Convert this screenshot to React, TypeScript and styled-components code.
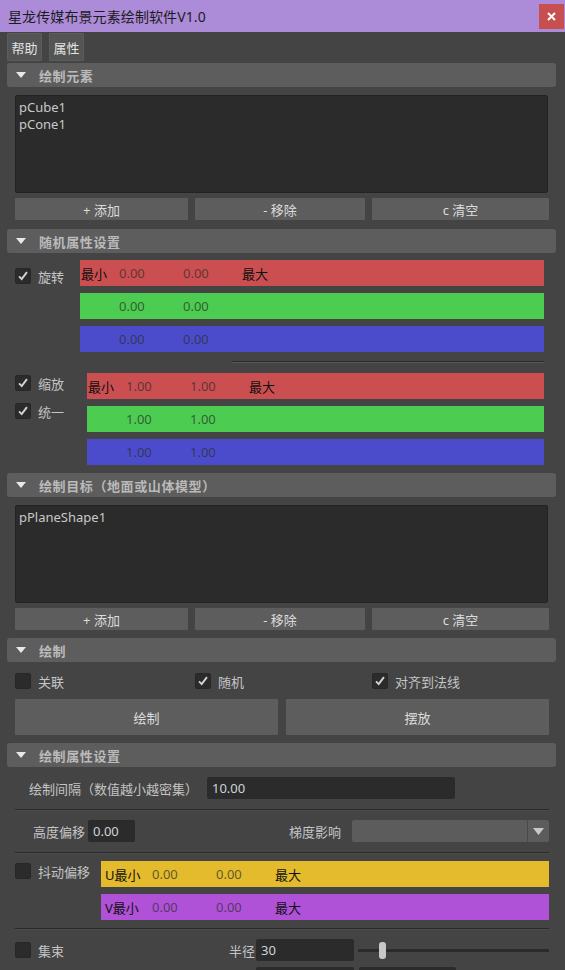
import { FC } from "react";
import styled, { createGlobalStyle } from "styled-components";

const GlobalStyle = createGlobalStyle`
  body {
    margin: 0;
    background: #444444;
  }
  * {
    box-sizing: border-box;
  }
`;

const FONT = `"Noto Sans", "Noto Sans CJK SC", sans-serif`;

const CheckBox: FC<{ checked?: boolean; label: string }> = ({ checked, label }) => (
  <CheckWrap>
    <Box>
      {checked && (
        <svg width="16" height="16" viewBox="0 0 16 16">
          <polyline
            points="3.5,8.5 6.5,11.5 12.5,3.5"
            fill="none"
            stroke="#d4d4d4"
            strokeWidth="2.2"
          />
        </svg>
      )}
    </Box>
    <span>{label}</span>
  </CheckWrap>
);

const SectionHeader: FC<{ title: string }> = ({ title }) => (
  <Header>
    <Triangle />
    {title}
  </Header>
);

type BarProps = {
  color: string;
  label?: string;
  min: string;
  max: string;
  labelWidth: number;
  pad: number;
  showMax?: boolean;
};

const ValueBar: FC<BarProps> = ({ color, label, min, max, labelWidth, pad, showMax }) => (
  <Bar $color={color} $labelWidth={labelWidth} $pad={pad}>
    <BarLabel>{label}</BarLabel>
    <BarValue>{min}</BarValue>
    <BarValue>{max}</BarValue>
    <BarLabel>{showMax ? "最大" : ""}</BarLabel>
  </Bar>
);

const App: FC = () => {
  return (
    <Window>
      <GlobalStyle />
      <TitleBar>
        <Title>星龙传媒布景元素绘制软件V1.0</Title>
        <CloseButton>
          <svg width="9" height="9" viewBox="0 0 9 9">
            <path d="M1 1 L8 8 M8 1 L1 8" stroke="#ffffff" strokeWidth="2" />
          </svg>
        </CloseButton>
      </TitleBar>

      <Body>
        <Tabs>
          <Tab>帮助</Tab>
          <Tab>属性</Tab>
        </Tabs>

        <SectionHeader title="绘制元素" />
        <Content $top={8} $bottom={9}>
          <ListBox>
            <div>pCube1</div>
            <div>pCone1</div>
          </ListBox>
          <ButtonRow>
            <Button>+ 添加</Button>
            <Button>- 移除</Button>
            <Button>c 清空</Button>
          </ButtonRow>
        </Content>

        <SectionHeader title="随机属性设置" />
        <Content $top={7} $bottom={8}>
          <AttrGroup $right={5}>
            <Side $width={65} $top={8}>
              <CheckBox checked label="旋转" />
            </Side>
            <Bars>
              <ValueBar color="#cb4f50" label="最小" min="0.00" max="0.00" labelWidth={38} pad={1} showMax />
              <ValueBar color="#4ccc50" min="0.00" max="0.00" labelWidth={38} pad={1} />
              <ValueBar color="#4b4ccb" min="0.00" max="0.00" labelWidth={38} pad={1} />
            </Bars>
          </AttrGroup>
          <ShortRule />
          <AttrGroup $right={5}>
            <Side $width={72} $top={2}>
              <CheckBox checked label="缩放" />
              <CheckBox checked label="统一" />
            </Side>
            <Bars>
              <ValueBar color="#cb4f50" label="最小" min="1.00" max="1.00" labelWidth={38} pad={1} showMax />
              <ValueBar color="#4ccc50" min="1.00" max="1.00" labelWidth={38} pad={1} />
              <ValueBar color="#4b4ccb" min="1.00" max="1.00" labelWidth={38} pad={1} />
            </Bars>
          </AttrGroup>
        </Content>

        <SectionHeader title="绘制目标（地面或山体模型）" />
        <Content $top={8} $bottom={8}>
          <ListBox>
            <div>pPlaneShape1</div>
          </ListBox>
          <ButtonRow>
            <Button>+ 添加</Button>
            <Button>- 移除</Button>
            <Button>c 清空</Button>
          </ButtonRow>
        </Content>

        <SectionHeader title="绘制" />
        <Content $top={11} $bottom={8}>
          <CheckRow>
            <CheckBox label="关联" />
            <CheckBox checked label="随机" />
            <CheckBox checked label="对齐到法线" />
          </CheckRow>
          <BigButtonRow>
            <BigButton>绘制</BigButton>
            <BigButton>摆放</BigButton>
          </BigButtonRow>
        </Content>

        <SectionHeader title="绘制属性设置" />
        <Content $top={10} $bottom={0}>
          <FormRow>
            <FieldLabel $width={183}>绘制间隔（数值越小越密集）</FieldLabel>
            <Field $width={248}>10.00</Field>
          </FormRow>
          <Rule $top={10} $bottom={9} />
          <FormRow>
            <FieldLabel $width={70}>高度偏移</FieldLabel>
            <Field $width={47} $gap={3}>0.00</Field>
            <FieldLabel $grow>梯度影响</FieldLabel>
            <Dropdown>
              <DropArrow>
                <svg width="11" height="7" viewBox="0 0 11 7">
                  <path d="M0 0 L11 0 L5.5 7 Z" fill="#c8c8c8" />
                </svg>
              </DropArrow>
            </Dropdown>
          </FormRow>
          <Rule $top={10} $bottom={7} />
          <AttrGroup $right={0}>
            <Side $width={86} $top={2}>
              <CheckBox label="抖动偏移" />
            </Side>
            <Bars>
              <ValueBar color="#e3bb2d" label="U最小" min="0.00" max="0.00" labelWidth={47} pad={4} showMax />
              <ValueBar color="#b052d8" label="V最小" min="0.00" max="0.00" labelWidth={47} pad={4} showMax />
            </Bars>
          </AttrGroup>
          <Rule $top={8} $bottom={9} />
          <FormRow>
            <CheckCell>
              <CheckBox label="集束" />
            </CheckCell>
            <FieldLabel $width={26}>半径</FieldLabel>
            <Field $width={98} $gap={1}>30</Field>
            <Slider>
              <Handle />
            </Slider>
          </FormRow>
          <FormRow $top={6}>
            <Field $width={98} $gap={241} />
            <Field $width={97} $gap={5} />
          </FormRow>
        </Content>
      </Body>
    </Window>
  );
};

const Window = styled.div`
  width: 565px;
  height: 970px;
  overflow: hidden;
  background: #444444;
  font-family: ${FONT};
  font-size: 13px;
  color: #c6c6c6;
`;

const TitleBar = styled.div`
  display: flex;
  align-items: center;
  justify-content: space-between;
  height: 32px;
  padding: 0 1px 0 8px;
  background: #ac8bd8;
`;

const Title = styled.div`
  font-size: 14px;
  color: #1c1c1c;
  letter-spacing: 0.1px;
`;

const CloseButton = styled.div`
  display: flex;
  align-items: center;
  justify-content: center;
  width: 25px;
  height: 25px;
  background: #c84f4f;
`;

const Body = styled.div`
  padding: 1px 9px 0 7px;
`;

const Tabs = styled.div`
  display: flex;
  gap: 7px;
  margin-bottom: 2px;
`;

const Tab = styled.div`
  display: flex;
  align-items: center;
  justify-content: center;
  width: 35px;
  height: 28px;
  background: #545454;
  border: 1px solid #5c5c5c;
  border-radius: 1px;
  color: #e2e2e2;
  font-size: 13px;
`;

const Header = styled.div`
  display: flex;
  align-items: center;
  gap: 13px;
  height: 24px;
  padding-left: 9px;
  background: #5d5d5d;
  border-radius: 3px;
  color: #bababa;
  font-weight: bold;
  font-size: 13px;
  letter-spacing: 0.6px;
`;

const Triangle = styled.span`
  width: 0;
  height: 0;
  border-left: 5px solid transparent;
  border-right: 5px solid transparent;
  border-top: 6px solid #e8e8e8;
`;

const Content = styled.div<{ $top: number; $bottom: number }>`
  padding: ${(p) => p.$top}px 7px ${(p) => p.$bottom}px 8px;
`;

const ListBox = styled.div`
  height: 98px;
  margin-right: 1px;
  padding: 3px 3px;
  background: #2b2b2b;
  border: 1px solid #232323;
  border-radius: 2px;
  color: #c9c9c9;
  font-size: 13px;
  line-height: 17px;
`;

const ButtonRow = styled.div`
  display: grid;
  grid-template-columns: 173px 170px 1fr;
  gap: 7px;
  margin-top: 5px;
`;

const Button = styled.div`
  display: flex;
  align-items: center;
  justify-content: center;
  height: 22px;
  background: #5d5d5d;
  border-radius: 1px;
  color: #dcdcdc;
  font-size: 13px;
`;

const AttrGroup = styled.div<{ $right: number }>`
  display: flex;
  padding-right: ${(p) => p.$right}px;
`;

const Side = styled.div<{ $width: number; $top: number }>`
  display: flex;
  flex-direction: column;
  gap: 12px;
  width: ${(p) => p.$width}px;
  flex-shrink: 0;
  padding-top: ${(p) => p.$top}px;
`;

const CheckWrap = styled.div`
  display: flex;
  align-items: center;
  gap: 7px;
  height: 16px;
  color: #c4c4c4;
  font-size: 13px;
  white-space: nowrap;
`;

const Box = styled.div`
  width: 16px;
  height: 16px;
  flex-shrink: 0;
  background: #2b2b2b;
  border: 1px solid #272727;
  border-radius: 2px;
  display: flex;
  align-items: center;
  justify-content: center;
`;

const Bars = styled.div`
  display: flex;
  flex-direction: column;
  gap: 7px;
  flex: 1;
`;

const Bar = styled.div<{ $color: string; $labelWidth: number; $pad: number }>`
  display: grid;
  grid-template-columns: ${(p) => p.$labelWidth}px 64px 59px auto;
  align-items: center;
  height: 26px;
  padding-left: ${(p) => p.$pad}px;
  background: ${(p) => p.$color};
  font-size: 13px;
`;

const BarLabel = styled.span`
  color: #111111;
  white-space: nowrap;
`;

const BarValue = styled.span`
  color: rgba(45, 45, 45, 0.72);
`;

const ShortRule = styled.div`
  height: 2px;
  margin: 9px 5px 10px 217px;
  border-top: 1px solid #2a2a2a;
  border-bottom: 1px solid #585858;
`;

const CheckRow = styled.div`
  display: grid;
  grid-template-columns: 173px 170px 1fr;
  gap: 7px;
`;

const BigButtonRow = styled.div`
  display: grid;
  grid-template-columns: 1fr 1fr;
  gap: 8px;
  margin-top: 10px;
`;

const BigButton = styled(Button)`
  height: 36px;
`;

const FormRow = styled.div<{ $top?: number }>`
  display: flex;
  align-items: center;
  height: 22px;
  margin-top: ${(p) => p.$top ?? 0}px;
`;

const FieldLabel = styled.div<{ $width?: number; $grow?: boolean }>`
  ${(p) => (p.$width ? `width: ${p.$width}px;` : "")}
  ${(p) => (p.$grow ? "flex: 1; margin-right: 11px;" : "flex-shrink: 0;")}
  text-align: right;
  white-space: nowrap;
  color: #c4c4c4;
  font-size: 13px;
`;

const Field = styled.div<{ $width: number; $gap?: number }>`
  width: ${(p) => p.$width}px;
  height: 22px;
  flex-shrink: 0;
  margin-left: ${(p) => p.$gap ?? 9}px;
  padding-left: 5px;
  display: flex;
  align-items: center;
  background: #2b2b2b;
  border-radius: 2px;
  color: #cfd3d8;
  font-size: 13px;
`;

const Dropdown = styled.div`
  display: flex;
  justify-content: flex-end;
  width: 197px;
  height: 22px;
  background: #5c5c5c;
  border-radius: 2px;
`;

const DropArrow = styled.div`
  display: flex;
  align-items: center;
  justify-content: center;
  width: 22px;
  border-left: 1px solid #4a4a4a;
`;

const Rule = styled.div<{ $top: number; $bottom: number }>`
  height: 2px;
  margin: ${(p) => p.$top}px 0 ${(p) => p.$bottom}px;
  border-top: 1px solid #2a2a2a;
  border-bottom: 1px solid #4b4b4b;
`;

const CheckCell = styled.div`
  width: 214px;
  flex-shrink: 0;
`;

const Slider = styled.div`
  flex: 1;
  display: flex;
  align-items: center;
  height: 17px;
  margin-left: 4px;
  background: linear-gradient(
    to bottom,
    transparent 7px,
    #2b2b2b 7px,
    #2b2b2b 10px,
    transparent 10px
  );
`;

const Handle = styled.div`
  width: 7px;
  height: 17px;
  margin-left: 21px;
  background: #c8c8c8;
  border-radius: 3px;
`;

export default App;
